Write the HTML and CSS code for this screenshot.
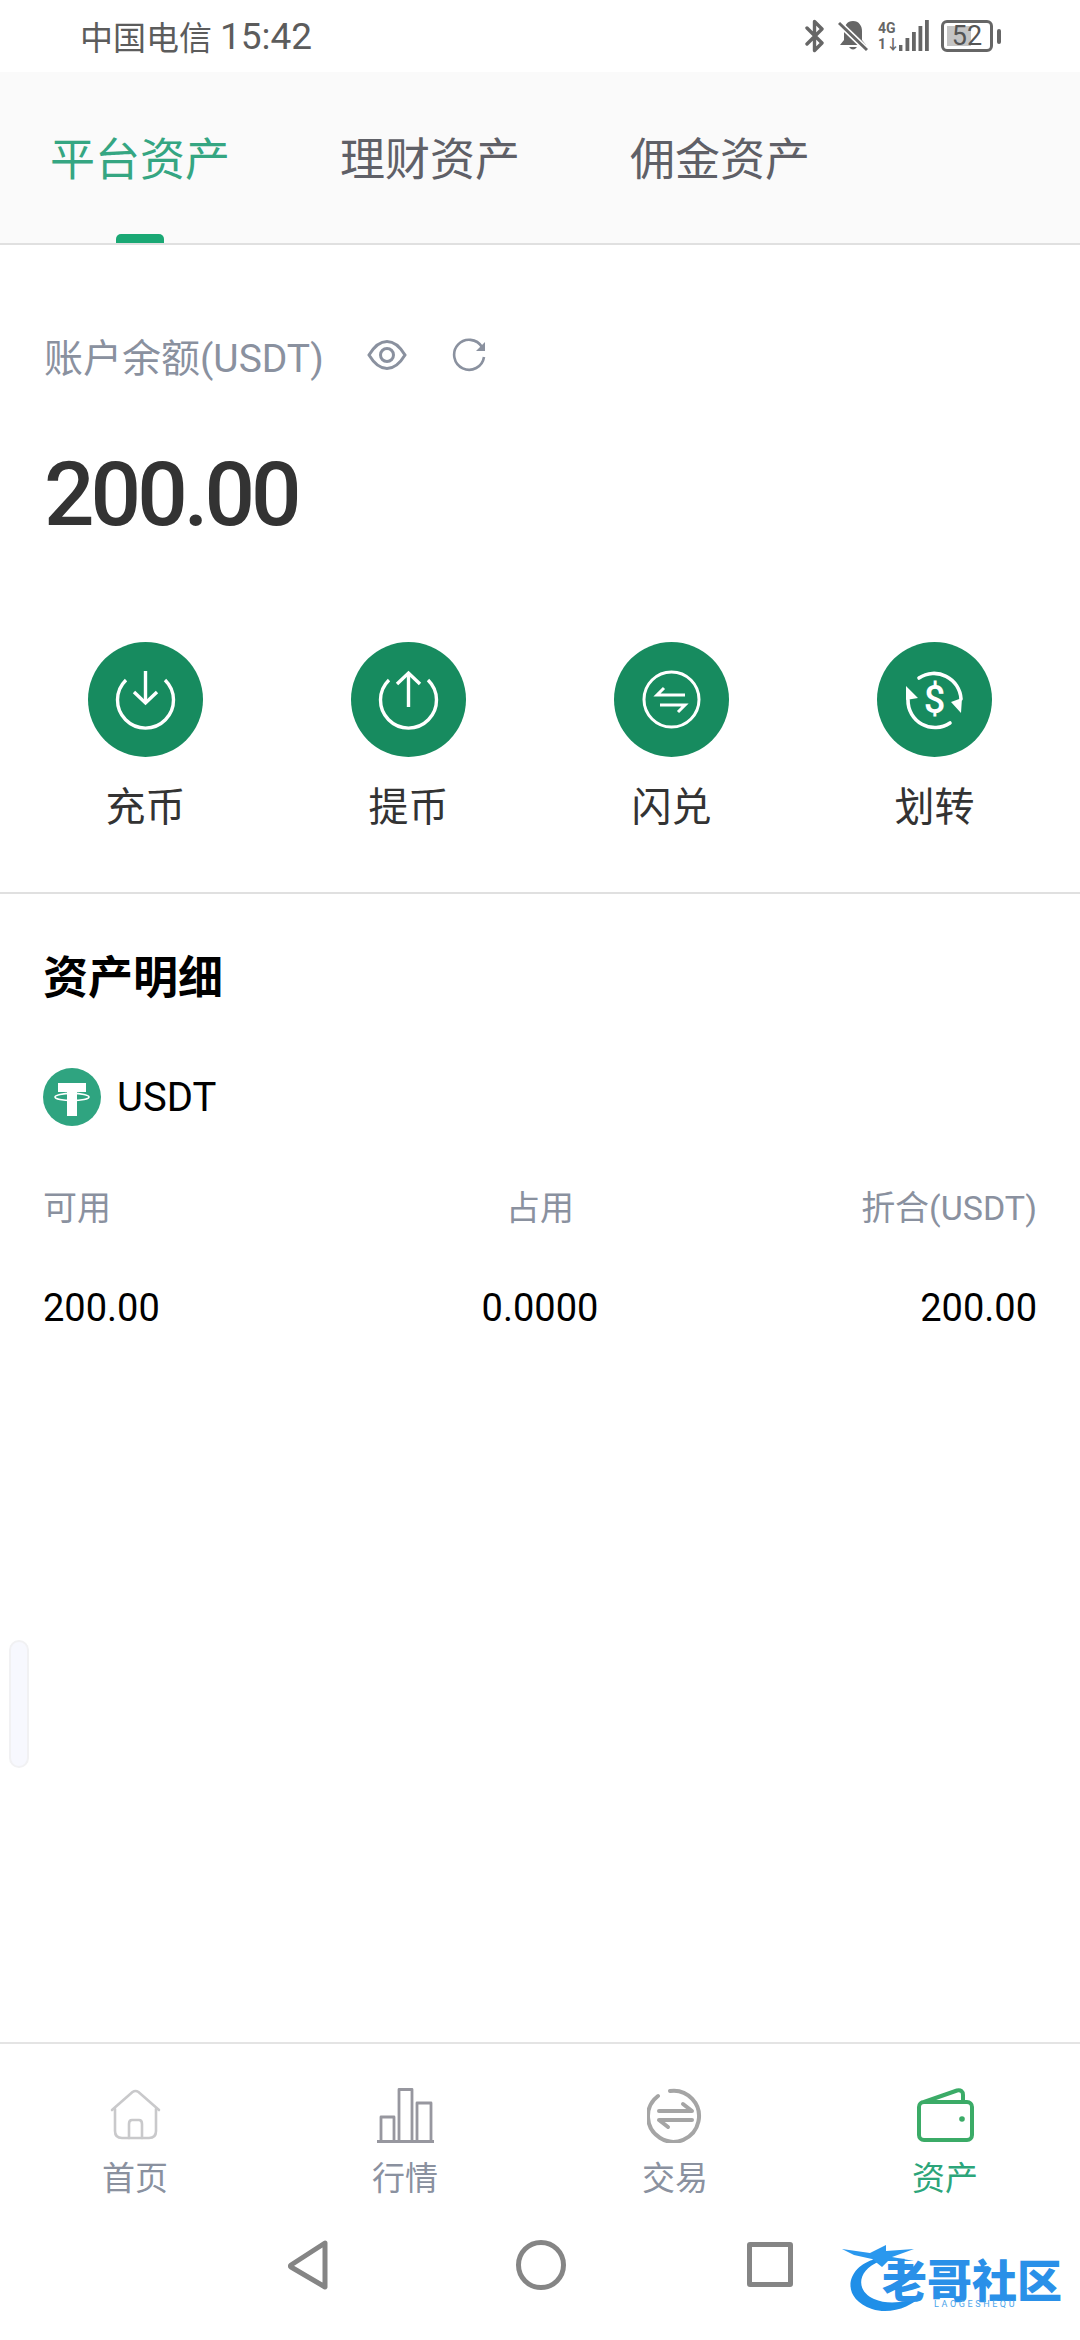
FILE: index.html
```html
<!DOCTYPE html>
<html lang="zh-CN">
<head>
<meta charset="UTF-8">
<meta name="viewport" content="width=device-width, initial-scale=1.0">
<title>资产</title>
<link rel="stylesheet" href="styles.css">
</head>
<body>

<div class="page">
    <div class="status-bar">
        <div class="status-left"><span class="carrier">中国电信</span><span class="clock">15:42</span></div>
        <div class="status-right">
            <svg class="ic-bt" viewBox="0 0 20 34"><path d="M2 9 L17 24 L9.5 31.5 V2.5 L17 10 L2 25" fill="none" stroke="#666" stroke-width="3.4" stroke-linecap="round" stroke-linejoin="round"/></svg>
            <svg class="ic-bell" viewBox="0 0 30 32"><path d="M15 1 C9 1 6 6 6 11 V20 L2 25 H28 L24 20 V11 C24 6 21 1 15 1 Z M11 27 Q15 32 19 27 Z" fill="#666"/><path d="M0 2 L30 31" stroke="#fff" stroke-width="6"/><path d="M1 3 L29 30" stroke="#666" stroke-width="3"/></svg>
            <div class="net">
                <div class="net-text"><span>4G</span><span>1↓</span></div>
                <svg class="ic-signal" viewBox="0 0 30 32"><rect x="0" y="25" width="3.4" height="6" fill="#666"/><rect x="6.5" y="18" width="3.8" height="13" fill="#666"/><rect x="13" y="12" width="3.8" height="19" fill="#666"/><rect x="19.5" y="6" width="3.8" height="25" fill="#666"/><rect x="26" y="0" width="3.8" height="31" fill="#666"/></svg>
            </div>
            <div class="battery">
                <div class="battery-body"><span class="battery-fill"></span><span class="battery-num">52</span></div>
                <span class="battery-tip"></span>
            </div>
        </div>
    </div>

    <div class="tabs">
        <div class="tab active">平台资产</div>
        <div class="tab">理财资产</div>
        <div class="tab">佣金资产</div>
    </div>

    <div class="main">
        <div class="balance-row">
            <span class="balance-label">账户余额(USDT)</span>
            <svg class="ic-eye" viewBox="0 0 40 32"><path d="M2 16 C8 6 14 2.5 20 2.5 C26 2.5 32 6 38 16 C32 26 26 29.5 20 29.5 C14 29.5 8 26 2 16 Z" fill="none" stroke="#8a919f" stroke-width="3"/><circle cx="20" cy="16" r="6.5" fill="none" stroke="#8a919f" stroke-width="3"/></svg>
            <svg class="ic-refresh" viewBox="0 0 34 34"><path d="M30 9 A15 15 0 1 0 32 19" fill="none" stroke="#8a919f" stroke-width="2.6"/><path d="M33 4 V13 H24 Z" fill="#8a919f"/></svg>
        </div>
        <div class="amount">200.00</div>

        <div class="actions">
            <div class="action">
                <svg class="action-icon" viewBox="0 0 115 115"><circle cx="57.5" cy="57.5" r="57.5" fill="#178b5f"/><g fill="none" stroke="#fff" stroke-width="3.4"><path d="M38 38 A28 28 0 1 0 77 38"/><path d="M57.5 29 V61"/><path d="M46 50 L57.5 61 L69 50"/></g></svg>
                <span>充币</span>
            </div>
            <div class="action">
                <svg class="action-icon" viewBox="0 0 115 115"><circle cx="57.5" cy="57.5" r="57.5" fill="#178b5f"/><g fill="none" stroke="#fff" stroke-width="3.4"><path d="M38 38 A28 28 0 1 0 77 38"/><path d="M57.5 65 V31"/><path d="M46 42 L57.5 31 L69 42"/></g></svg>
                <span>提币</span>
            </div>
            <div class="action">
                <svg class="action-icon" viewBox="0 0 115 115"><circle cx="57.5" cy="57.5" r="57.5" fill="#178b5f"/><g fill="none" stroke="#fff" stroke-width="3"><circle cx="57.5" cy="57.5" r="27.5"/><path d="M50 46 L43 53 H71"/><path d="M46 63 H71 L64 70"/></g></svg>
                <span>闪兑</span>
            </div>
            <div class="action">
                <svg class="action-icon" viewBox="0 0 115 115"><circle cx="57.5" cy="57.5" r="57.5" fill="#178b5f"/><g fill="none" stroke="#fff" stroke-width="3.6" stroke-linecap="round"><path d="M42 36 A27 27 0 0 1 84 57"/><path d="M73 81 A27 27 0 0 1 31 58"/></g><path d="M74 60 L85 56 L84 71 Z M29 44 L41 56 L29 58 Z" fill="#fff"/><text class="dollar" x="57.5" y="71" text-anchor="middle">$</text></svg>
                <span>划转</span>
            </div>
        </div>

        <div class="detail">
            <h3 class="detail-title">资产明细</h3>
            <div class="coin">
                <svg class="coin-logo" viewBox="0 0 58 58"><circle cx="29" cy="29" r="29" fill="#2fa480"/><path d="M15 15 H43 V24 H34 V48 H24 V24 H15 Z" fill="#fff"/><ellipse cx="29" cy="29" rx="17" ry="3.6" fill="none" stroke="#fff" stroke-width="1.6"/></svg>
                <span>USDT</span>
            </div>
            <div class="grid-row heads">
                <span>可用</span><span>占用</span><span>折合(USDT)</span>
            </div>
            <div class="grid-row values">
                <span>200.00</span><span>0.0000</span><span>200.00</span>
            </div>
        </div>
    </div>

    <div class="tabbar">
        <div class="tabbar-item">
            <svg class="tabbar-icon" viewBox="0 0 57 55"><g fill="none" stroke="#c9c9cb" stroke-width="2.6" stroke-linecap="round"><path d="M5 22 L25.5 4 Q28.5 2 31.5 4 L52 22"/><path d="M8 21 V43 Q8 50 15 50 H42 Q49 50 49 43 V21"/><path d="M22 50 V36 Q22 32 25 32 H32 Q35 32 35 36 V50"/></g></svg>
            <span>首页</span>
        </div>
        <div class="tabbar-item">
            <svg class="tabbar-icon" viewBox="0 0 57 55"><g fill="none" stroke="#97979f" stroke-width="2.8" stroke-linejoin="round"><path d="M4 53 V29 H17 V53"/><path d="M22 53 V1.5 H35 V53"/><path d="M40 53 V15 H54 V53"/></g><path d="M0 52 H57 V55 H0 Z" fill="#97979f"/></svg>
            <span>行情</span>
        </div>
        <div class="tabbar-item">
            <svg class="tabbar-icon" viewBox="0 0 57 55"><g fill="none" stroke="#a5a5a5" stroke-width="4" stroke-linecap="round" stroke-linejoin="round"><path d="M23 3 A25.5 25.5 0 1 1 11 8"/><path d="M12 23 H45 L36 16"/><path d="M45 32 H12 L21 39"/></g></svg>
            <span>交易</span>
        </div>
        <div class="tabbar-item active">
            <svg class="tabbar-icon" viewBox="0 0 57 55"><g fill="none" stroke="#3bab67" stroke-width="4" stroke-linejoin="round"><rect x="2" y="14" width="53" height="38" rx="5"/><path d="M7 14 L40 2.5 Q46 1.5 46 7 V14"/></g><circle cx="45" cy="31" r="2.8" fill="#3bab67"/></svg>
            <span>资产</span>
        </div>
    </div>

    <div class="sysnav">
        <svg class="sys-back" viewBox="0 0 41 50"><path d="M37 3 L3 25 Q2 26 3 27 L37 47 Z" fill="none" stroke="#858585" stroke-width="5" stroke-linejoin="round"/></svg>
        <span class="sys-home"></span>
        <span class="sys-square"></span>
    </div>

    <span class="float-handle"></span>

    <div class="watermark">
        <svg class="watermark-dragon" viewBox="0 0 220 67">
            <path d="M34 14 C6 20 -4 52 30 64 C48 70 70 62 80 50 C64 58 46 60 32 54 C14 46 14 26 38 16 Z" fill="#1f8fe8"/>
            <path d="M0 4 L28 8 L44 0 L44 6 L72 4 L50 12 L72 16 L46 16 L40 22 L30 14 L12 10 Z" fill="#2a98ee"/>
        </svg>
        <span class="watermark-name">老哥社区</span>
        <span class="watermark-sub">LAOGESHEQU</span>
    </div>
</div>

</body>
</html>
```

FILE: styles.css
```css
* {
    box-sizing: border-box;
}

body {
    margin: 0;
    background: #fff;
    font-family: Roboto, "Noto Sans CJK SC", sans-serif;
}

.page {
    position: relative;
    width: 1080px;
    height: 2340px;
    display: flex;
    flex-direction: column;
    overflow: hidden;
    background: #fff;
}

/* status bar */
.status-bar {
    height: 72px;
    padding: 0 79px 0 80px;
    display: flex;
    justify-content: space-between;
    align-items: center;
    color: #5c5c5c;
}

.status-left {
    display: flex;
    align-items: center;
    gap: 8px;
}

.carrier {
    font-size: 33px;
}

.clock {
    font-size: 37px;
}

.status-right {
    display: flex;
    align-items: center;
}

.ic-bt {
    width: 20px;
    height: 34px;
}

.ic-bell {
    width: 30px;
    height: 32px;
    margin-left: 13px;
}

.net {
    display: flex;
    align-items: center;
    margin-left: 10px;
}

.net-text {
    width: 21px;
    display: flex;
    flex-direction: column;
    font-size: 14px;
    line-height: 16px;
    font-weight: 700;
    color: #666;
}

.ic-signal {
    width: 30px;
    height: 32px;
}

.battery {
    display: flex;
    align-items: center;
    margin-left: 12px;
}

.battery-body {
    position: relative;
    width: 52px;
    height: 32px;
    border: 3px solid #666;
    border-radius: 6px;
    display: flex;
    justify-content: center;
    align-items: center;
}

.battery-fill {
    position: absolute;
    left: 3px;
    top: 3px;
    bottom: 3px;
    width: 24px;
    background: #c4c4c4;
}

.battery-num {
    position: relative;
    font-size: 27px;
    color: #555;
}

.battery-tip {
    width: 4px;
    height: 15px;
    margin-left: 4px;
    background: #666;
    border-radius: 2px;
}

/* top tabs */
.tabs {
    position: relative;
    height: 173px;
    padding-left: 50px;
    display: flex;
    gap: 110px;
    align-items: center;
    background: #fafafa;
    border-bottom: 2px solid #e0e0e0;
}

.tab {
    position: relative;
    align-self: stretch;
    display: flex;
    align-items: center;
    padding-bottom: 2px;
    font-size: 45px;
    color: #5f6067;
}

.tab.active {
    color: #35a682;
}

.tab.active::after {
    content: "";
    position: absolute;
    left: 66px;
    bottom: 0;
    width: 48px;
    height: 9px;
    border-radius: 5px 5px 0 0;
    background: #1aa874;
}

/* balance */
.main {
    flex: 1;
}

.balance-row {
    height: 50px;
    margin-top: 85px;
    padding-left: 44px;
    display: flex;
    align-items: center;
}

.balance-label {
    font-size: 39px;
    color: #8a919f;
}

.ic-eye {
    width: 40px;
    height: 32px;
    margin-left: 43px;
}

.ic-refresh {
    width: 34px;
    height: 34px;
    margin-left: 45px;
}

.amount {
    height: 100px;
    margin-top: 65px;
    padding-left: 44px;
    font-size: 89px;
    font-weight: 500;
    line-height: 100px;
    letter-spacing: -4px;
    color: #333;
}

/* action buttons */
.actions {
    margin-top: 97px;
    padding: 0 14px 59px;
    display: grid;
    grid-template-columns: repeat(4, 1fr);
    border-bottom: 2px solid #e0e0e0;
}

.action {
    display: flex;
    flex-direction: column;
    align-items: center;
    gap: 26px;
    font-size: 40px;
    line-height: 50px;
    color: #333;
}

.action-icon {
    width: 115px;
    height: 115px;
    display: block;
}

.dollar {
    font-family: Roboto, sans-serif;
    font-size: 38px;
    font-weight: 500;
    fill: #fff;
}

/* asset detail */
.detail {
    padding: 0 43px;
}

.detail-title {
    margin: 60px 0 0;
    font-size: 45px;
    line-height: 50px;
    font-weight: 700;
    color: #000;
}

.coin {
    margin-top: 64px;
    display: flex;
    align-items: center;
    gap: 16px;
    font-size: 40px;
    color: #000;
}

.coin-logo {
    width: 58px;
    height: 58px;
}

.grid-row {
    display: grid;
    grid-template-columns: 1fr 1fr 1fr;
}

.grid-row span:nth-child(2) {
    text-align: center;
}

.grid-row span:nth-child(3) {
    text-align: right;
}

.heads {
    margin-top: 60px;
    font-size: 34px;
    line-height: 44px;
    color: #8a919f;
}

.values {
    margin-top: 56px;
    font-size: 38px;
    line-height: 44px;
    color: #000;
}

/* bottom nav */
.tabbar {
    height: 180px;
    padding-top: 44px;
    display: grid;
    grid-template-columns: repeat(4, 1fr);
    align-items: start;
    border-top: 2px solid #e4e4e4;
}

.tabbar-item {
    display: flex;
    flex-direction: column;
    align-items: center;
    gap: 14px;
    font-size: 33px;
    line-height: 44px;
    color: #8a919f;
}

.tabbar-item.active {
    color: #2ca57a;
}

.tabbar-icon {
    width: 57px;
    height: 55px;
    display: block;
}

/* system navigation */
.sysnav {
    height: 118px;
    padding: 0 0 33px 288px;
    display: flex;
    align-items: center;
}

.sys-back {
    width: 41px;
    height: 50px;
}

.sys-home {
    width: 50px;
    height: 50px;
    margin-left: 187px;
    border: 5px solid #858585;
    border-radius: 50%;
}

.sys-square {
    width: 46px;
    height: 45px;
    margin-left: 181px;
    border: 5px solid #858585;
    border-radius: 3px;
}

/* overlays */
.float-handle {
    position: absolute;
    left: 9px;
    top: 1640px;
    width: 20px;
    height: 128px;
    background: #f7f8fe;
    border: 2px solid #f1f1f3;
    border-radius: 10px;
}

.watermark {
    position: absolute;
    left: 842px;
    top: 2245px;
    width: 220px;
    height: 67px;
}

.watermark-dragon {
    position: absolute;
    left: 0;
    top: 0;
    width: 220px;
    height: 67px;
}

.watermark-name {
    position: absolute;
    left: 40px;
    top: 18px;
    font-size: 45px;
    line-height: 40px;
    font-weight: 900;
    white-space: nowrap;
    color: #2a90e8;
}

.watermark-sub {
    position: absolute;
    left: 92px;
    top: 54px;
    font-size: 9px;
    line-height: 10px;
    letter-spacing: 2.6px;
    white-space: nowrap;
    color: #4aa4ea;
}
```
